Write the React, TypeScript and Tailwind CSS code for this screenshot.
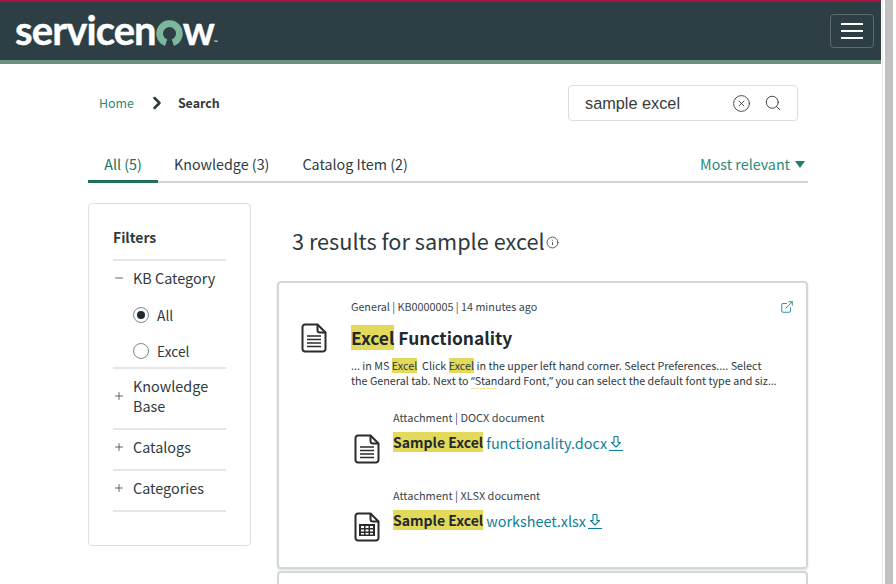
import React from 'react';
import { ChevronRight, Search, CircleX, ExternalLink, Info, Plus, Minus } from 'lucide-react';

const sans = '[font-family:"Noto_Sans_CJK_SC","Noto_Sans",sans-serif]';

const DocIcon = ({ sheet = false }: { sheet?: boolean }) => (
  <svg width="26" height="30" viewBox="0 0 26 30" fill="none" stroke="#2b2b2b" strokeWidth="2">
    <path d="M4 1.5h12.5l8 8V26a2.5 2.5 0 0 1-2.500 2.500H4A2.500 2.500 0 0 1 1.500 26V4A2.500 2.500 0 0 1 4 1.500z" strokeLinejoin="round" />
    <path d="M16.500 1.500v5.500a2.500 2.500 0 0 0 2.500 2.500h5.500" />
    {sheet ? (
      <g fill="#2b2b2b" stroke="none">
        <path d="M5 12h16v12H5z" />
        <path fill="#fff" d="M7 14h3v2H7zM11.500 14h3v2h-3zM16 14h3v2h-3zM7 17.500h3v2H7zM11.500 17.500h3v2h-3zM16 17.500h3v2h-3zM7 21h3v1.500H7zM11.500 21h3v1.500h-3zM16 21h3v1.500h-3z" />
      </g>
    ) : (
      <path d="M6 14h14M6 17.500h14M6 21h14M6 24.500h14" strokeWidth="1.500" transform="translate(0 -1)" />
    )}
  </svg>
);

const DownloadIcon = () => (
  <svg width="16" height="17" viewBox="0 0 16 17" fill="none" stroke="#0f7f96" strokeWidth="1.100" className="ml-[1px] mt-[2px]">
    <path d="M6 1.500h4v6h2.500L8 12 3.500 7.500H6z" strokeLinejoin="round" />
    <path d="M1 15.500h14" />
  </svg>
);

const Mark = ({ children }: { children: React.ReactNode }) => <span className="bg-[#e3d95b]">{children}</span>;

// the CJK family sets these as full-width, so they come from the latin family
const Punct = ({ children }: { children: React.ReactNode }) => <span className="font-['Noto_Sans',sans-serif]">{children}</span>;

const FilterRow = ({ label, open = false }: { label: string; open?: boolean }) => (
  <div className="flex items-center gap-[8px] text-[14.400px] leading-[20px] text-[#2e3a3e]">
    {open ? <Minus size={12} strokeWidth={1.500} className="shrink-0" /> : <Plus size={12} strokeWidth={1.500} className="shrink-0" />}
    <span>{label}</span>
  </div>
);

const Radio = ({ label, checked = false }: { label: string; checked?: boolean }) => (
  <div className="flex items-center gap-[8px] pl-[20px] text-[13.800px] leading-[20px] text-[#2e3a3e]">
    <span className="flex h-[16px] w-[16px] items-center justify-center rounded-full border border-[#7b8a8c]">
      {checked && <span className="h-[8px] w-[8px] rounded-full bg-[#1f2a2e]" />}
    </span>
    {label}
  </div>
);

const Attachment = ({ kind, name, sheet }: { kind: string; name: string; sheet?: boolean }) => (
  <div className="flex gap-[13px]">
    <div className="pt-[26px]">
      <DocIcon sheet={sheet} />
    </div>
    <div>
      <div className="text-[10.950px] leading-[18px] text-[#3b4649]">Attachment | {kind} document</div>
      <div className="mt-[6px] flex items-center text-[14.400px] leading-[21px]">
        <span className="text-[14px] font-semibold text-[#1f2a2e]">
          <Mark>Sample Excel</Mark>
        </span>
        <span className="ml-[3px] text-[#0f7f96]">{name}</span>
        <DownloadIcon />
      </div>
    </div>
  </div>
);

export default function App() {
  return (
    <div className={`flex h-[584px] w-[896px] overflow-hidden bg-white ${sans}`}>
      <div className="w-[881px] shrink-0">
        {/* Header */}
        <header className="flex h-[64px] items-center justify-between border-t-2 border-b-4 border-t-[#a8143f] border-b-[#6c9281] bg-[#2d3f45] pl-[15px] pr-[7px]">
          <div className="flex items-center pb-[2px] font-['Lato',sans-serif] text-[40px] font-bold leading-[40px] tracking-[-0.9px] text-white [-webkit-text-stroke:0.4px_white]">
            <span>servicen</span>
            <svg width="27" height="27" viewBox="0 0 26 26" fill="none" className="mt-[7px]">
              <path d="M9.750 21.930A9.500 9.500 0 1 1 16.250 21.930" stroke="#7ab79c" strokeWidth="6.500" />
            </svg>
            <span>w</span>
            <span className="mt-[24px] text-[5px] leading-[6px] [-webkit-text-stroke:0px]">™</span>
          </div>
          <button className="flex h-[34px] w-[44px] flex-col items-center justify-center gap-[5px] rounded-[4px] border border-[#5b6b70]">
            <span className="h-[2px] w-[22px] bg-white" />
            <span className="h-[2px] w-[22px] bg-white" />
            <span className="h-[2px] w-[22px] bg-white" />
          </button>
        </header>

        <div className="pl-[88px] pr-[73px]">
          {/* Breadcrumb and search */}
          <div className="flex items-center justify-between pl-[11px] pr-[10px] pt-[21px]">
            <div className="flex items-center text-[12.400px] leading-[20px]">
              <span className="text-[#2a8a78]">Home</span>
              <ChevronRight size={20} strokeWidth={3} className="ml-[13px] text-[#2e3a3e]" />
              <span className="ml-[11px] font-bold text-[#2e3a3e]">Search</span>
            </div>
            <div className="flex h-[36px] w-[230px] items-center rounded-[4px] border border-[#dddddd] pl-[16px] font-['Liberation_Sans',sans-serif] text-[16.300px] text-[#3a3a3a]">
              <span className="w-[147px]">sample excel</span>
              <CircleX size={19} strokeWidth={1.100} className="text-[#333333]" />
              <Search size={18} strokeWidth={1.200} className="ml-[13px] text-[#333333]" />
            </div>
          </div>

          {/* Tabs */}
          <div className="mt-[24px] flex h-[38px] items-stretch justify-between border-b-2 border-[#cfd4d4] text-[14.300px] leading-[22px]">
            <div className="flex">
              <div className="-mb-[2px] w-[70px] border-b-[3px] border-[#1e6f5c] pt-[8px] text-center text-[#1e6f5c]">All (5)</div>
              <div className="ml-[16px] pt-[8px] text-[#2e3a3e]">Knowledge (3)</div>
              <div className="ml-[33px] pt-[8px] text-[#2e3a3e]">Catalog Item (2)</div>
            </div>
            <div className="flex items-start gap-[5px] pr-[3px] pt-[8px] text-[#2a8a78]">
              Most relevant
              <svg width="10" height="7" viewBox="0 0 10 7" className="mt-[8px]">
                <path d="M0 0h10L5 7z" fill="#1e7f6c" />
              </svg>
            </div>
          </div>

          <div className="mt-[20px] flex">
            {/* Filters */}
            <aside className="h-[343px] w-[163px] shrink-0 rounded-[4px] border border-[#dde1e1] px-[24px] pt-[22px]">
              <div className="border-b-2 border-[#e3e7e7] pb-[11px] text-[13.900px] font-semibold leading-[22px] text-[#2e3a3e]">Filters</div>
              <div className="pt-[7px]">
                <FilterRow label="KB Category" open />
                <div className="flex flex-col gap-[16px] pt-[17px] pb-[6px]">
                  <Radio label="All" checked />
                  <Radio label="Excel" />
                </div>
              </div>
              <div className="border-t-2 border-[#e3e7e7] pt-[7px] pb-[12px]">
                <FilterRow label="Knowledge Base" />
              </div>
              <div className="border-t-2 border-[#e3e7e7] pt-[7px] pb-[12px]">
                <FilterRow label="Catalogs" />
              </div>
              <div className="border-y-2 border-[#e3e7e7] pt-[7px] pb-[12px]">
                <FilterRow label="Categories" />
              </div>
            </aside>

            {/* Results */}
            <main className="ml-[26px] min-w-0 flex-1">
              <h1 className="flex items-center pl-[15px] pt-[22px] text-[21.700px] leading-[32px] text-[#2e3a3e]">
                3 results for sample excel
                <Info size={13} strokeWidth={1.500} className="ml-[1px] mt-[2px]" />
              </h1>
              <div className="relative mt-[24px] h-[288px] rounded-[4px] border-2 border-[#d2d7d7] pl-[72px] pr-[16px] pt-[15px] shadow-[0_1px_2px_rgba(0,0,0,0.15)]">
                <ExternalLink size={14} strokeWidth={1.500} className="absolute right-[12px] top-[17px] text-[#0f7f96]" />
                <div className="flex">
                  <div className="-ml-[50px] mr-[24px] pt-[25px]">
                    <DocIcon />
                  </div>
                  <div className="min-w-0">
                    <div className="text-[10.750px] leading-[18px] text-[#3b4649]">General | KB0000005 | 14 minutes ago</div>
                    <div className="mt-[8px] text-[17.400px] font-semibold leading-[27px] text-[#1f2a2e]">
                      <Mark>Excel</Mark> Functionality
                    </div>
                    <div className="mt-[7px] whitespace-nowrap text-[10.750px] leading-[15px] text-[#2e3a3e]">
                      ... in MS <Mark>Excel</Mark> &nbsp;Click <Mark>Excel</Mark> in the upper left hand corner. Select Preferences.... Select
                      <br />
                      the General tab. Next to <span className="border-b border-[#efe9a0]"><Punct>“</Punct>Stan</span>dard Font,<Punct>”</Punct> you can select the default font type and siz<Punct>…</Punct>
                    </div>
                  </div>
                </div>
                <div className="ml-[3px] mt-[19px] flex flex-col gap-[22px]">
                  <Attachment kind="DOCX" name="functionality.docx" />
                  <Attachment kind="XLSX" name="worksheet.xlsx" sheet />
                </div>
              </div>
              <div className="mt-[2px] h-[20px] rounded-[4px] border-2 border-[#d2d7d7]" />
            </main>
          </div>
        </div>
      </div>

      {/* Scrollbar */}
      <div className="ml-[1px] flex h-full w-[14px]">
        <div className="w-[3px] border-l border-[#e8e8e8]" />
        <div className="w-[8px] bg-[#c1c1c1]" />
      </div>
    </div>
  );
}
